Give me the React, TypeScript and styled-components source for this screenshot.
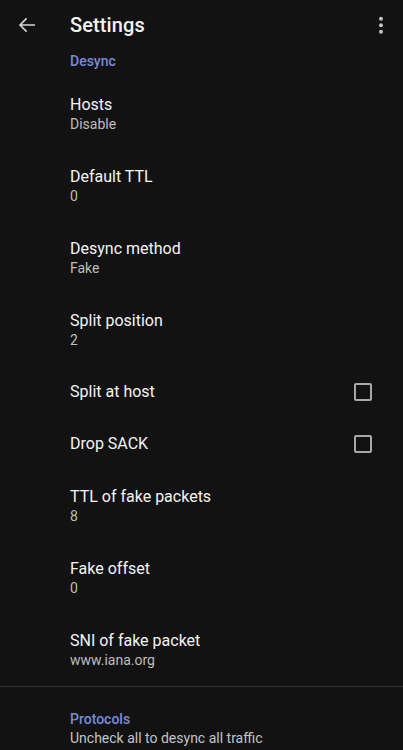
import React from "react";
import styled, { createGlobalStyle } from "styled-components";

const Global = createGlobalStyle`
  html, body { margin: 0; padding: 0; background: #121212; }
  body { font-family: Roboto, "Noto Sans", sans-serif; -webkit-font-smoothing: antialiased; }
  #root { min-height: 750px; background: #121212; }
`;

const Screen = styled.div`
  width: 403px;
  height: 750px;
  overflow: hidden;
  background: #121212;
  color: #ffffff;
  display: flex;
  flex-direction: column;
`;

const Toolbar = styled.header`
  height: 50px;
  display: flex;
  align-items: center;
  flex-shrink: 0;
  padding-left: 15px;
  padding-right: 10px;
`;

const IconButton = styled.div`
  width: 24px;
  height: 24px;
  display: flex;
  align-items: center;
  justify-content: center;
  flex-shrink: 0;
`;

const Title = styled.h1`
  margin: 0 0 0 31px;
  flex: 1;
  font-size: 20px;
  font-weight: 500;
  line-height: 26px;
  color: #f2f2f2;
  letter-spacing: 0.1px;
`;

const CategoryHeader = styled.div<{ $top: number; $bottom: number }>`
  padding: ${(p) => p.$top}px 16px ${(p) => p.$bottom}px 70px;
`;

const CategoryTitle = styled.div`
  font-size: 14px;
  font-weight: 500;
  line-height: 20px;
  color: #7b8bd8;
`;

const CategorySummary = styled.div`
  font-size: 14px;
  line-height: 19px;
  color: #c4c4c4;
`;

const Item = styled.div<{ $single?: boolean }>`
  display: flex;
  align-items: center;
  padding: ${(p) => (p.$single ? "15px 31px 16px 70px" : "16px 31px 16px 70px")};
`;

const ItemText = styled.div`
  flex: 1;
  display: flex;
  flex-direction: column;
`;

const ItemTitle = styled.div`
  font-size: 16px;
  line-height: 21px;
  color: #f4f4f4;
`;

const ItemSummary = styled.div`
  font-size: 14px;
  line-height: 19px;
  color: #bdbdbd;
`;

const Checkbox = styled.div`
  width: 18px;
  height: 18px;
  box-sizing: border-box;
  border: 2px solid #a8a8a8;
  border-radius: 2px;
  flex-shrink: 0;
`;

const Divider = styled.div`
  height: 1px;
  background: #363636;
  flex-shrink: 0;
`;

type Pref = { title: string; summary?: string; checkbox?: boolean };

const prefs: Pref[] = [
  { title: "Hosts", summary: "Disable" },
  { title: "Default TTL", summary: "0" },
  { title: "Desync method", summary: "Fake" },
  { title: "Split position", summary: "2" },
  { title: "Split at host", checkbox: true },
  { title: "Drop SACK", checkbox: true },
  { title: "TTL of fake packets", summary: "8" },
  { title: "Fake offset", summary: "0" },
  { title: "SNI of fake packet", summary: "www.iana.org" },
];

export default function App() {
  return (
    <>
      <Global />
      <Screen>
        <Toolbar>
          <IconButton>
            <svg width="24" height="24" viewBox="0 0 24 24">
              <path
                d="M20 12H5.2M11.6 5.4L5 12l6.6 6.6"
                fill="none"
                stroke="#d6d6d6"
                strokeWidth="1.6"
              />
            </svg>
          </IconButton>
          <Title>Settings</Title>
          <IconButton>
            <svg width="24" height="24" viewBox="0 0 24 24">
              <circle cx="12" cy="5.8" r="2" fill="#c2c2c2" />
              <circle cx="12" cy="12.3" r="2" fill="#c2c2c2" />
              <circle cx="12" cy="18.8" r="2" fill="#c2c2c2" />
            </svg>
          </IconButton>
        </Toolbar>
        <CategoryHeader $top={1} $bottom={7}>
          <CategoryTitle>Desync</CategoryTitle>
        </CategoryHeader>
        {prefs.map((p) => (
          <Item key={p.title} $single={!p.summary}>
            <ItemText>
              <ItemTitle>{p.title}</ItemTitle>
              {p.summary && <ItemSummary>{p.summary}</ItemSummary>}
            </ItemText>
            {p.checkbox && <Checkbox />}
          </Item>
        ))}
        <Divider />
        <CategoryHeader $top={22} $bottom={0}>
          <CategoryTitle>Protocols</CategoryTitle>
          <CategorySummary>Uncheck all to desync all traffic</CategorySummary>
        </CategoryHeader>
      </Screen>
    </>
  );
}
